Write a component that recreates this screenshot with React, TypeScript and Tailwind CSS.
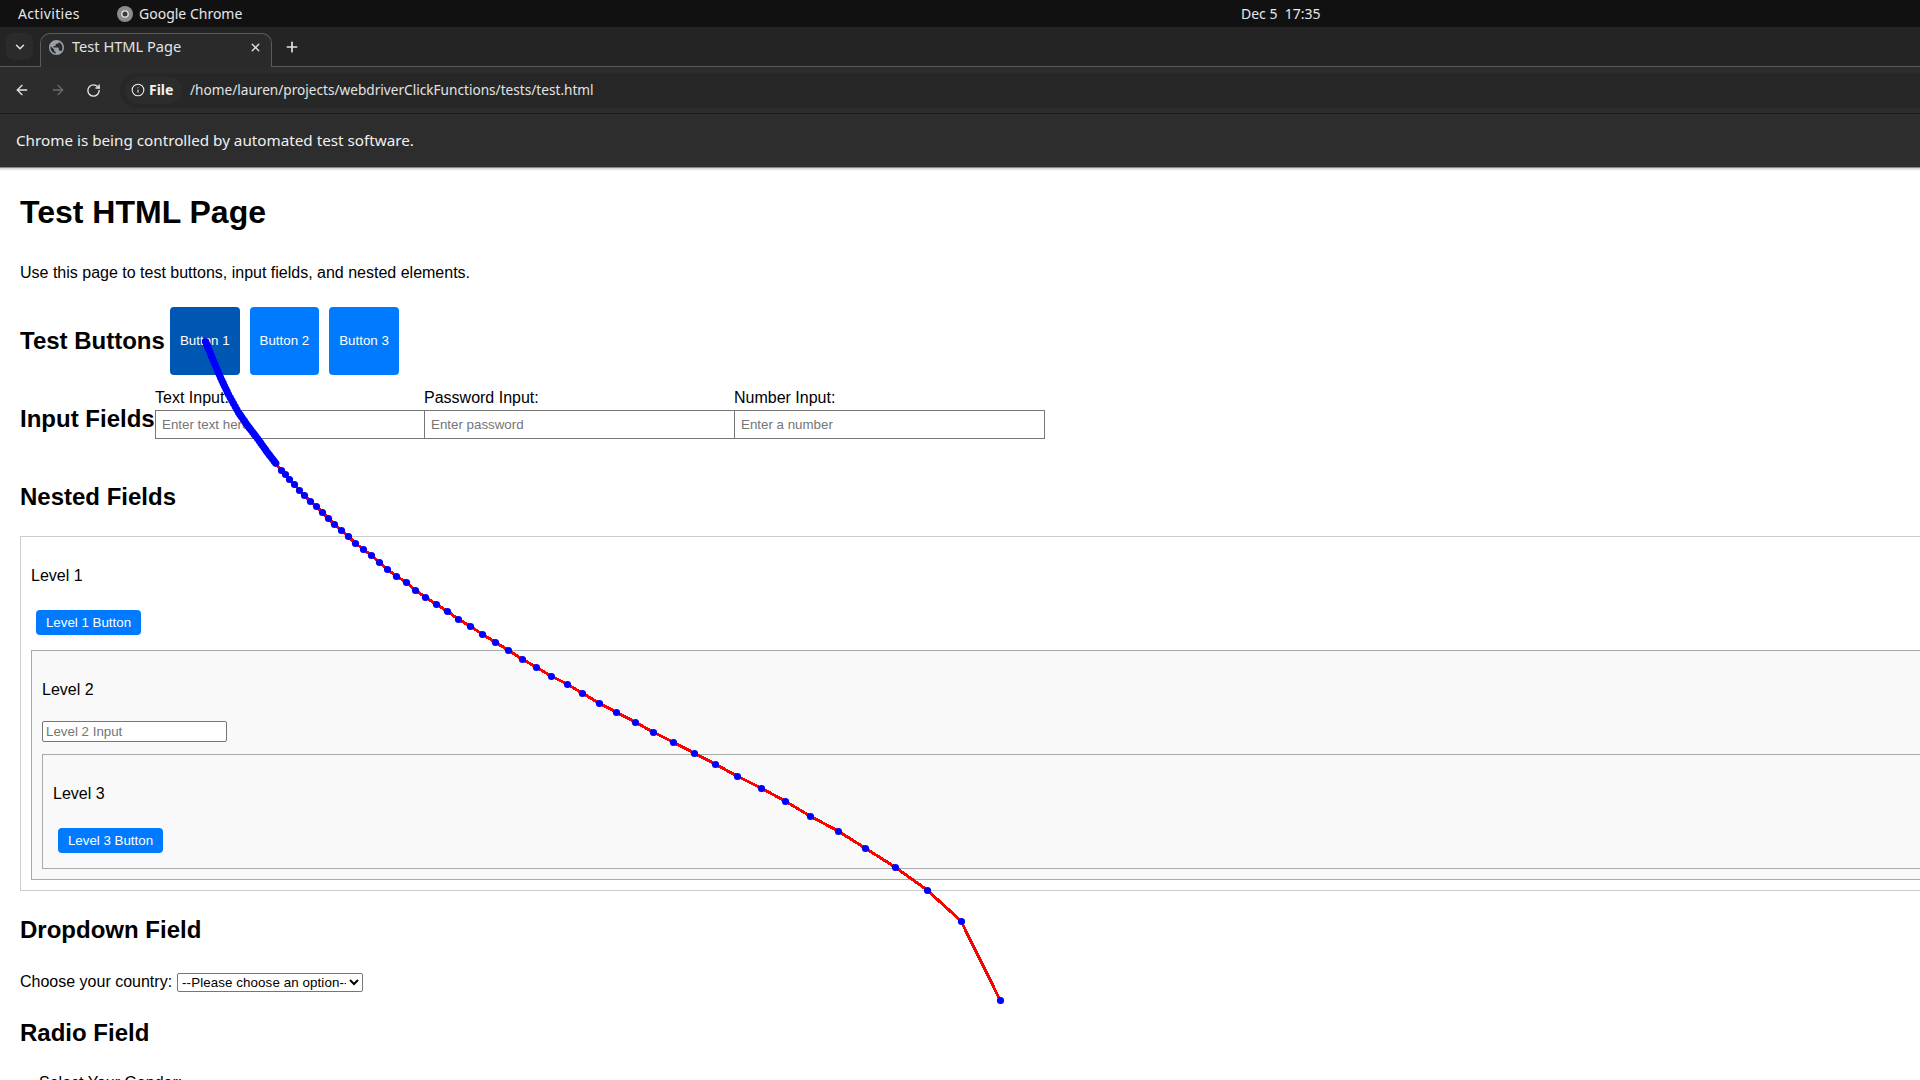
import { ArrowLeft, ArrowRight, ChevronDown, Info, Plus, RotateCw, X } from "lucide-react";

// cursor path waypoints: the dense start of the trail, then the recorded dots
const startPath: [number, number][] = [
  [205, 341], [212, 358], [220, 377], [228, 394], [238, 412], [247, 425], [257, 438], [267, 452], [277, 465],
];

const dots: [number, number][] = [
  [281, 470], [285, 474], [289, 479], [294, 484], [299, 490], [304, 495], [310, 501], [316, 506], [322, 512],
  [328, 518], [334, 524], [341, 530], [348, 536], [355, 543], [363, 549], [371, 555], [379, 562], [387, 569],
  [396, 576], [406, 582], [415, 590], [425, 597], [436, 604], [447, 611], [458, 619], [470, 626], [482, 634],
  [495, 642], [508, 650], [522, 659], [536, 667], [551, 676], [567, 684], [582, 693], [599, 703], [616, 712],
  [635, 722], [653, 732], [673, 742], [694, 753], [715, 764], [737, 776], [761, 788], [785, 801], [810, 816],
  [838, 831], [865, 848], [895, 867], [927, 890], [961, 921], [1000, 1000],
];

function denseStart() {
  const out: [number, number][] = [];
  for (let i = 0; i < startPath.length - 1; i++) {
    const [ax, ay] = startPath[i];
    const [bx, by] = startPath[i + 1];
    for (let t = 0; t < 6; t++) {
      out.push([ax + ((bx - ax) * t) / 6, ay + ((by - ay) * t) / 6]);
    }
  }
  return out;
}

function CursorTrail() {
  const all = [...denseStart(), ...dots];
  return (
    <svg className="absolute left-0 top-0 pointer-events-none" width={1920} height={1080}>
      <polyline
        points={all.map((p) => p.join(",")).join(" ")}
        fill="none"
        stroke="#ff0000"
        strokeWidth={3}
        shapeRendering="crispEdges"
      />
      {all.map(([x, y], i) => (
        <circle key={i} cx={x + 0.5} cy={y + 0.5} r={3.6} fill="#0000ff" />
      ))}
    </svg>
  );
}

function GlobeIcon() {
  return (
    <svg width={15} height={15} viewBox="2 2 20 20" fill="#9aa0a6">
      <path d="M12 2C6.48 2 2 6.48 2 12s4.48 10 10 10 10-4.48 10-10S17.52 2 12 2zm-1 17.93c-3.95-.49-7-3.85-7-7.93 0-.62.08-1.21.21-1.79L9 15v1c0 1.1.9 2 2 2v1.93zm6.9-2.54c-.26-.81-1-1.39-1.9-1.39h-1v-3c0-.55-.45-1-1-1H8v-2h2c.55 0 1-.45 1-1V7h2c1.1 0 2-.9 2-2v-.41c2.93 1.19 5 4.06 5 7.41 0 2.08-.8 3.97-2.1 5.39z" />
    </svg>
  );
}

function ChromeDockIcon() {
  return (
    <svg width={16} height={16} viewBox="0 0 16 16">
      <circle cx={8} cy={8} r={8} fill="#8c8c8c" />
      <circle cx={8} cy={8} r={3.8} fill="#e6e6e6" />
      <circle cx={8} cy={8} r={2.5} fill="#3a3a3a" />
    </svg>
  );
}

function BlueButton({ label, dark }: { label: string; dark?: boolean }) {
  return (
    <button
      type="button"
      className={`m-[5px] rounded-[4px] px-[10px] text-[13.33px] text-white ${dark ? "bg-[#0056b3]" : "bg-[#007bff]"}`}
    >
      {label}
    </button>
  );
}

function SmallButton({ label }: { label: string }) {
  return (
    <div className="ml-[5px] mb-[5px] flex pt-[7px]">
      <button
        type="button"
        className="h-[25px] w-[105px] rounded-[4px] bg-[#007bff] text-[13.33px] text-white"
      >
        {label}
      </button>
    </div>
  );
}

function LabeledInput({ label, placeholder, width }: { label: string; placeholder: string; width: string }) {
  return (
    <div className={`flex flex-col pt-[6px] ${width}`}>
      <label className="h-[24px] leading-6">{label}</label>
      <input
        placeholder={placeholder}
        className="h-[29px] w-full border border-[#767676] px-[6px] text-[13.33px] placeholder:text-[#757575]"
      />
    </div>
  );
}

function BrowserChrome() {
  return (
    <div className="font-['Noto_Sans',sans-serif] text-[#e3e3e3]">
      <div className="relative flex h-[27px] items-center bg-[#111111] text-[14px] text-[#e8e8e8]">
        <span className="ml-[18px] w-[99px] tracking-[0.35px]">Activities</span>
        <ChromeDockIcon />
        <span className="ml-[6px]">Google Chrome</span>
        <span className="absolute left-[1241px] text-[14px]">Dec 5&nbsp;&nbsp;17:35</span>
      </div>

      <div className="flex h-[40px] items-end border-b border-[#5a5a5a] bg-[#242424]">
        <div className="mb-[6px] ml-[6px] flex h-[27px] w-[27px] items-center justify-center rounded-[8px] bg-[#2b2b2b]">
          <ChevronDown size={14} strokeWidth={2.5} />
        </div>
        <div className="relative -mb-px ml-[7px] flex h-[34px] w-[232px] items-center rounded-t-[10px] border-x border-t border-[#5a5a5a] bg-[#2a2a2a] pb-[6px] pl-[8px] text-[14.6px]">
          <GlobeIcon />
          <span className="ml-[8px] flex-1 pb-[3px]">Test HTML Page</span>
          <X size={13} strokeWidth={2.5} className="mr-[9px]" />
        </div>
        <Plus size={16} strokeWidth={2.5} className="mb-[11px] ml-[12px]" />
      </div>

      <div className="flex h-[47px] items-center border-b border-[#1a1a1a] bg-[#2c2c2c]">
        <ArrowLeft size={16} strokeWidth={2} className="ml-[14px]" />
        <ArrowRight size={16} strokeWidth={2} className="ml-[20px] text-[#6b6b6b]" />
        <RotateCw size={15} strokeWidth={2.2} className="ml-[20px]" />
        <div className="ml-[19px] flex h-[35px] flex-1 items-center rounded-l-full bg-[#272727]">
          <div className="ml-[5px] flex h-[27px] w-[57px] items-center rounded-full bg-[#2c2c2c] pl-[6px] text-[14px] font-bold text-[#f0f0f0]">
            <Info size={14} strokeWidth={1.8} />
            <span className="ml-[4px]">File</span>
          </div>
          <span className="ml-[8px] text-[13.63px]">/home/lauren/projects/webdriverClickFunctions/tests/test.html</span>
        </div>
      </div>

      <div className="flex h-[54px] items-center border-b border-[#888888] bg-[#2d2d2d] pb-[2px] pl-[16px] text-[15.23px] text-[#f0f0f0]">
        Chrome is being controlled by automated test software.
      </div>
      <div className="h-[3px] bg-gradient-to-b from-[#d0d0d0] to-white" />
    </div>
  );
}

export default function App() {
  return (
    <div className="relative h-[1080px] w-[1920px] overflow-hidden bg-white font-['Liberation_Sans',Arial,sans-serif] text-[16px] leading-6 text-black">
      <BrowserChrome />

      <div className="w-[2400px] px-[20px] pt-[17px]">
        <h1 className="text-[32px] font-bold leading-[48px]">Test HTML Page</h1>
        <p className="mt-[25px]">Use this page to test buttons, input fields, and nested elements.</p>

        <div className="mt-[17px] flex h-[78px] items-stretch">
          <h2 className="self-center text-[24px] font-bold leading-9">Test Buttons</h2>
          <BlueButton label="Button 1" dark />
          <BlueButton label="Button 2" />
          <BlueButton label="Button 3" />
        </div>

        <div className="flex h-[78px] items-start">
          <h2 className="w-[135px] self-center text-[24px] font-bold leading-9 whitespace-nowrap">Input Fields</h2>
          <LabeledInput label="Text Input:" placeholder="Enter text here" width="w-[270px]" />
          <LabeledInput label="Password Input:" placeholder="Enter password" width="-ml-px w-[311px]" />
          <LabeledInput label="Number Input:" placeholder="Enter a number" width="-ml-px w-[311px]" />
        </div>

        <h2 className="mt-[21px] text-[24px] font-bold leading-9">Nested Fields</h2>

        <div className="mt-[21px] border border-[#cccccc] bg-white p-[10px]">
          <p className="mt-[17px] mb-[15px]">Level 1</p>
          <SmallButton label="Level 1 Button" />
          <div className="mt-[15px] border border-[#aaaaaa] bg-[#f9f9f9] p-[10px]">
            <p className="mt-[17px] mb-[15px]">Level 2</p>
            <input
              placeholder="Level 2 Input"
              className="mt-[19px] block h-[21px] w-[185px] rounded-[2px] border border-[#767676] bg-white px-[3px] text-[13.33px] placeholder:text-[#757575]"
            />
            <div className="mt-[12px] border border-[#aaaaaa] bg-[#f9f9f9] p-[10px]">
              <p className="mt-[17px] mb-[15px]">Level 3</p>
              <SmallButton label="Level 3 Button" />
            </div>
          </div>
        </div>

        <h2 className="mt-[21px] text-[24px] font-bold leading-9">Dropdown Field</h2>
        <div className="mt-[22px] flex h-[24px] items-center">
          <span>Choose your country:</span>
          <select className="ml-[5px] h-[19px] w-[186px] rounded-[2px] border border-[#767676] bg-white text-[13.33px] tracking-[0.1px] leading-none appearance-auto">
            <option>--Please choose an option--</option>
          </select>
        </div>

        <h2 className="mt-[21px] text-[24px] font-bold leading-9">Radio Field</h2>
        <p className="ml-[19px] mt-[20px]">Select Your Gender:</p>
      </div>

      <CursorTrail />
    </div>
  );
}
